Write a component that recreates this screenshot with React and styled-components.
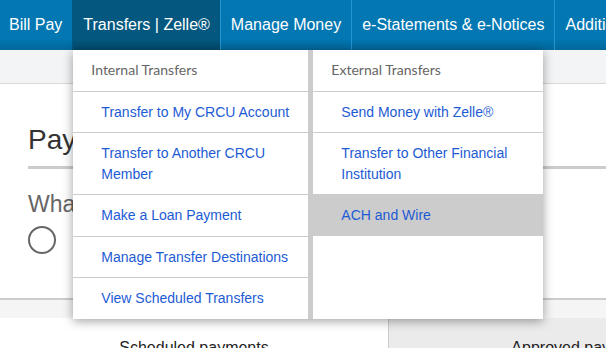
import React from 'react';
import styled, { createGlobalStyle } from 'styled-components';

const GlobalStyle = createGlobalStyle`
  html, body {
    margin: 0;
    padding: 0;
    overflow: hidden;
    background: #fff;
    font-family: "Liberation Sans", Arial, sans-serif;
  }
`;

const navItems = [
  { label: 'Bill Pay', first: true },
  { label: 'Transfers | Zelle®', active: true },
  { label: 'Manage Money' },
  { label: 'e-Statements & e-Notices' },
  { label: 'Additional Services' },
];

const internalLinks = [
  'Transfer to My CRCU Account',
  'Transfer to Another CRCU Member',
  'Make a Loan Payment',
  'Manage Transfer Destinations',
  'View Scheduled Transfers',
];

const externalLinks = [
  { label: 'Send Money with Zelle®' },
  { label: 'Transfer to Other Financial Institution' },
  { label: 'ACH and Wire', hover: true },
];

const TransfersMenu = () => (
  <Menu>
    <MenuColumn>
      <MenuHeader>Internal Transfers</MenuHeader>
      {internalLinks.map((l, i) => (
        <MenuLink key={l} $last={i === internalLinks.length - 1}>{l}</MenuLink>
      ))}
    </MenuColumn>
    <MenuColumn>
      <MenuHeader>External Transfers</MenuHeader>
      {externalLinks.map((l) => (
        <MenuLink key={l.label} $hover={l.hover}>{l.label}</MenuLink>
      ))}
    </MenuColumn>
  </Menu>
);

const App = () => {
  return (
    <Page>
      <GlobalStyle />
      <Nav>
        {navItems.map((item) => (
          <NavItem key={item.label} $active={item.active} $first={item.first}>
            {item.label}
            {item.active && <TransfersMenu />}
          </NavItem>
        ))}
      </Nav>
      <SubBar />
      <Card>
        <Title>Payments</Title>
        <Question>What would you like to do?</Question>
        <Radio />
      </Card>
      <TabArea>
        <Tab $active>Scheduled payments</Tab>
        <Tab>Approved payments</Tab>
      </TabArea>
    </Page>
  );
};

export default App;

const Page = styled.div`
  width: 606px;
  height: 348px;
  overflow: hidden;
`;

const Nav = styled.div`
  display: flex;
  height: 50px;
  white-space: nowrap;
  background: linear-gradient(to bottom, #0277b2 0%, #0277b2 78%, #02679a 100%);
`;

const NavItem = styled.div`
  position: relative;
  flex-shrink: 0;
  padding: 0 10px 0 ${(p) => (p.$first ? '9px' : '10px')};
  line-height: 50px;
  font-size: 16px;
  color: #fff;
  border-left: 1px solid ${(p) => (p.$first ? 'transparent' : p.$active ? '#03577e' : '#2493d2')};
  margin-left: ${(p) => (p.$first ? '-1px' : '0')};
  background: ${(p) =>
    p.$active ? 'linear-gradient(to bottom, #04587f 0%, #04587f 78%, #034a6c 100%)' : 'transparent'};
`;

const Menu = styled.div`
  position: absolute;
  top: 100%;
  left: 0;
  z-index: 10;
  display: grid;
  grid-template-columns: 235px 230px;
  gap: 5px;
  background: #cccccc;
  box-shadow: 0 2px 10px rgba(0, 0, 0, 0.38);
  white-space: normal;
`;

const MenuColumn = styled.div`
  display: flex;
  flex-direction: column;
  background: #fff;
`;

const MenuHeader = styled.div`
  padding: 10px 18px;
  line-height: 20.5px;
  font-family: Lato, "Liberation Sans", sans-serif;
  font-size: 14px;
  color: #666;
  border-bottom: 1px solid #cccccc;
`;

const MenuLink = styled.div`
  padding: 10px 8px 10px 28px;
  line-height: 20.5px;
  font-size: 14px;
  color: #1d5bd4;
  background: ${(p) => (p.$hover ? '#cccccc' : '#fff')};
  border-bottom: ${(p) => (p.$last || p.$hover ? 'none' : '1px solid #cccccc')};
`;

const SubBar = styled.div`
  height: 33px;
  background: #f3f4f5;
  border-bottom: 1px solid #d9d9d9;
`;

const Card = styled.div`
  padding: 39px 0 44px 28px;
  background: #fff;
  border-bottom: 2px solid #cccccc;
`;

const Title = styled.h1`
  margin: 0;
  padding-bottom: 9px;
  font-size: 28px;
  font-weight: normal;
  line-height: 34px;
  color: #333;
  border-bottom: 3px solid #cccccc;
`;

const Question = styled.div`
  margin-top: 21px;
  font-size: 23px;
  line-height: 28px;
  color: #666;
`;

const Radio = styled.div`
  margin-top: 8px;
  width: 28px;
  height: 28px;
  box-sizing: border-box;
  border: 2px solid #666;
  border-radius: 50%;
`;

const TabArea = styled.div`
  display: flex;
  padding-top: 18px;
  background: #f5f5f5;
`;

const Tab = styled.div`
  flex-shrink: 0;
  width: 388px;
  height: 60px;
  box-sizing: border-box;
  padding-top: 20px;
  text-align: center;
  font-size: 16px;
  line-height: 20px;
  color: #222;
  background: ${(p) => (p.$active ? '#fff' : '#ebebeb')};
  border-left: ${(p) => (p.$active ? 'none' : '1px solid #cccccc')};
`;
